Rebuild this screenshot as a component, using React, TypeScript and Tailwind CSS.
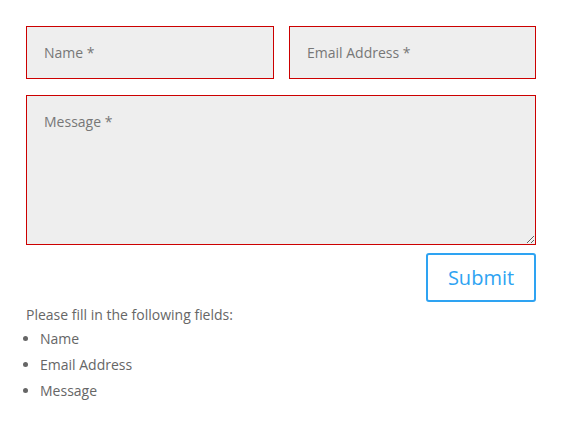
export default function App() {
  return (
    <div className="min-h-screen bg-white px-[26px] pt-[26px] text-[14px] text-[#666]" style={{ fontFamily: '"Open Sans", sans-serif' }}>
      <form className="w-[510px]" onSubmit={(e) => e.preventDefault()}>
        <div className="flex gap-[15px]">
          <input
            type="text"
            placeholder="Name *"
            className="h-[53px] w-[248px] border border-[#cc0000] bg-[#eee] px-[17px] text-[14px] text-[#666] outline-none placeholder:text-[#777]"
          />
          <input
            type="email"
            placeholder="Email Address *"
            className="h-[53px] w-[247px] border border-[#cc0000] bg-[#eee] px-[17px] text-[14px] text-[#666] outline-none placeholder:text-[#777]"
          />
        </div>
        <textarea
          placeholder="Message *"
          className="mt-[16px] block h-[150px] w-[510px] border border-[#cc0000] bg-[#eee] px-[17px] py-[16px] text-[14px] leading-[19px] text-[#666] outline-none placeholder:text-[#777]"
        />
        <div className="mt-[8px] flex justify-end">
          <button
            type="submit"
            className="h-[49px] w-[110px] rounded-[3px] border-2 border-[#2ea3f2] bg-white text-[20px] text-[#2ea3f2]"
          >
            Submit
          </button>
        </div>
      </form>
      <p className="pt-[1px] leading-[23px]">Please fill in the following fields:</p>
      <ul className="list-disc pl-[14px] leading-[26px]">
        <li>Name</li>
        <li>Email Address</li>
        <li>Message</li>
      </ul>
    </div>
  );
}
